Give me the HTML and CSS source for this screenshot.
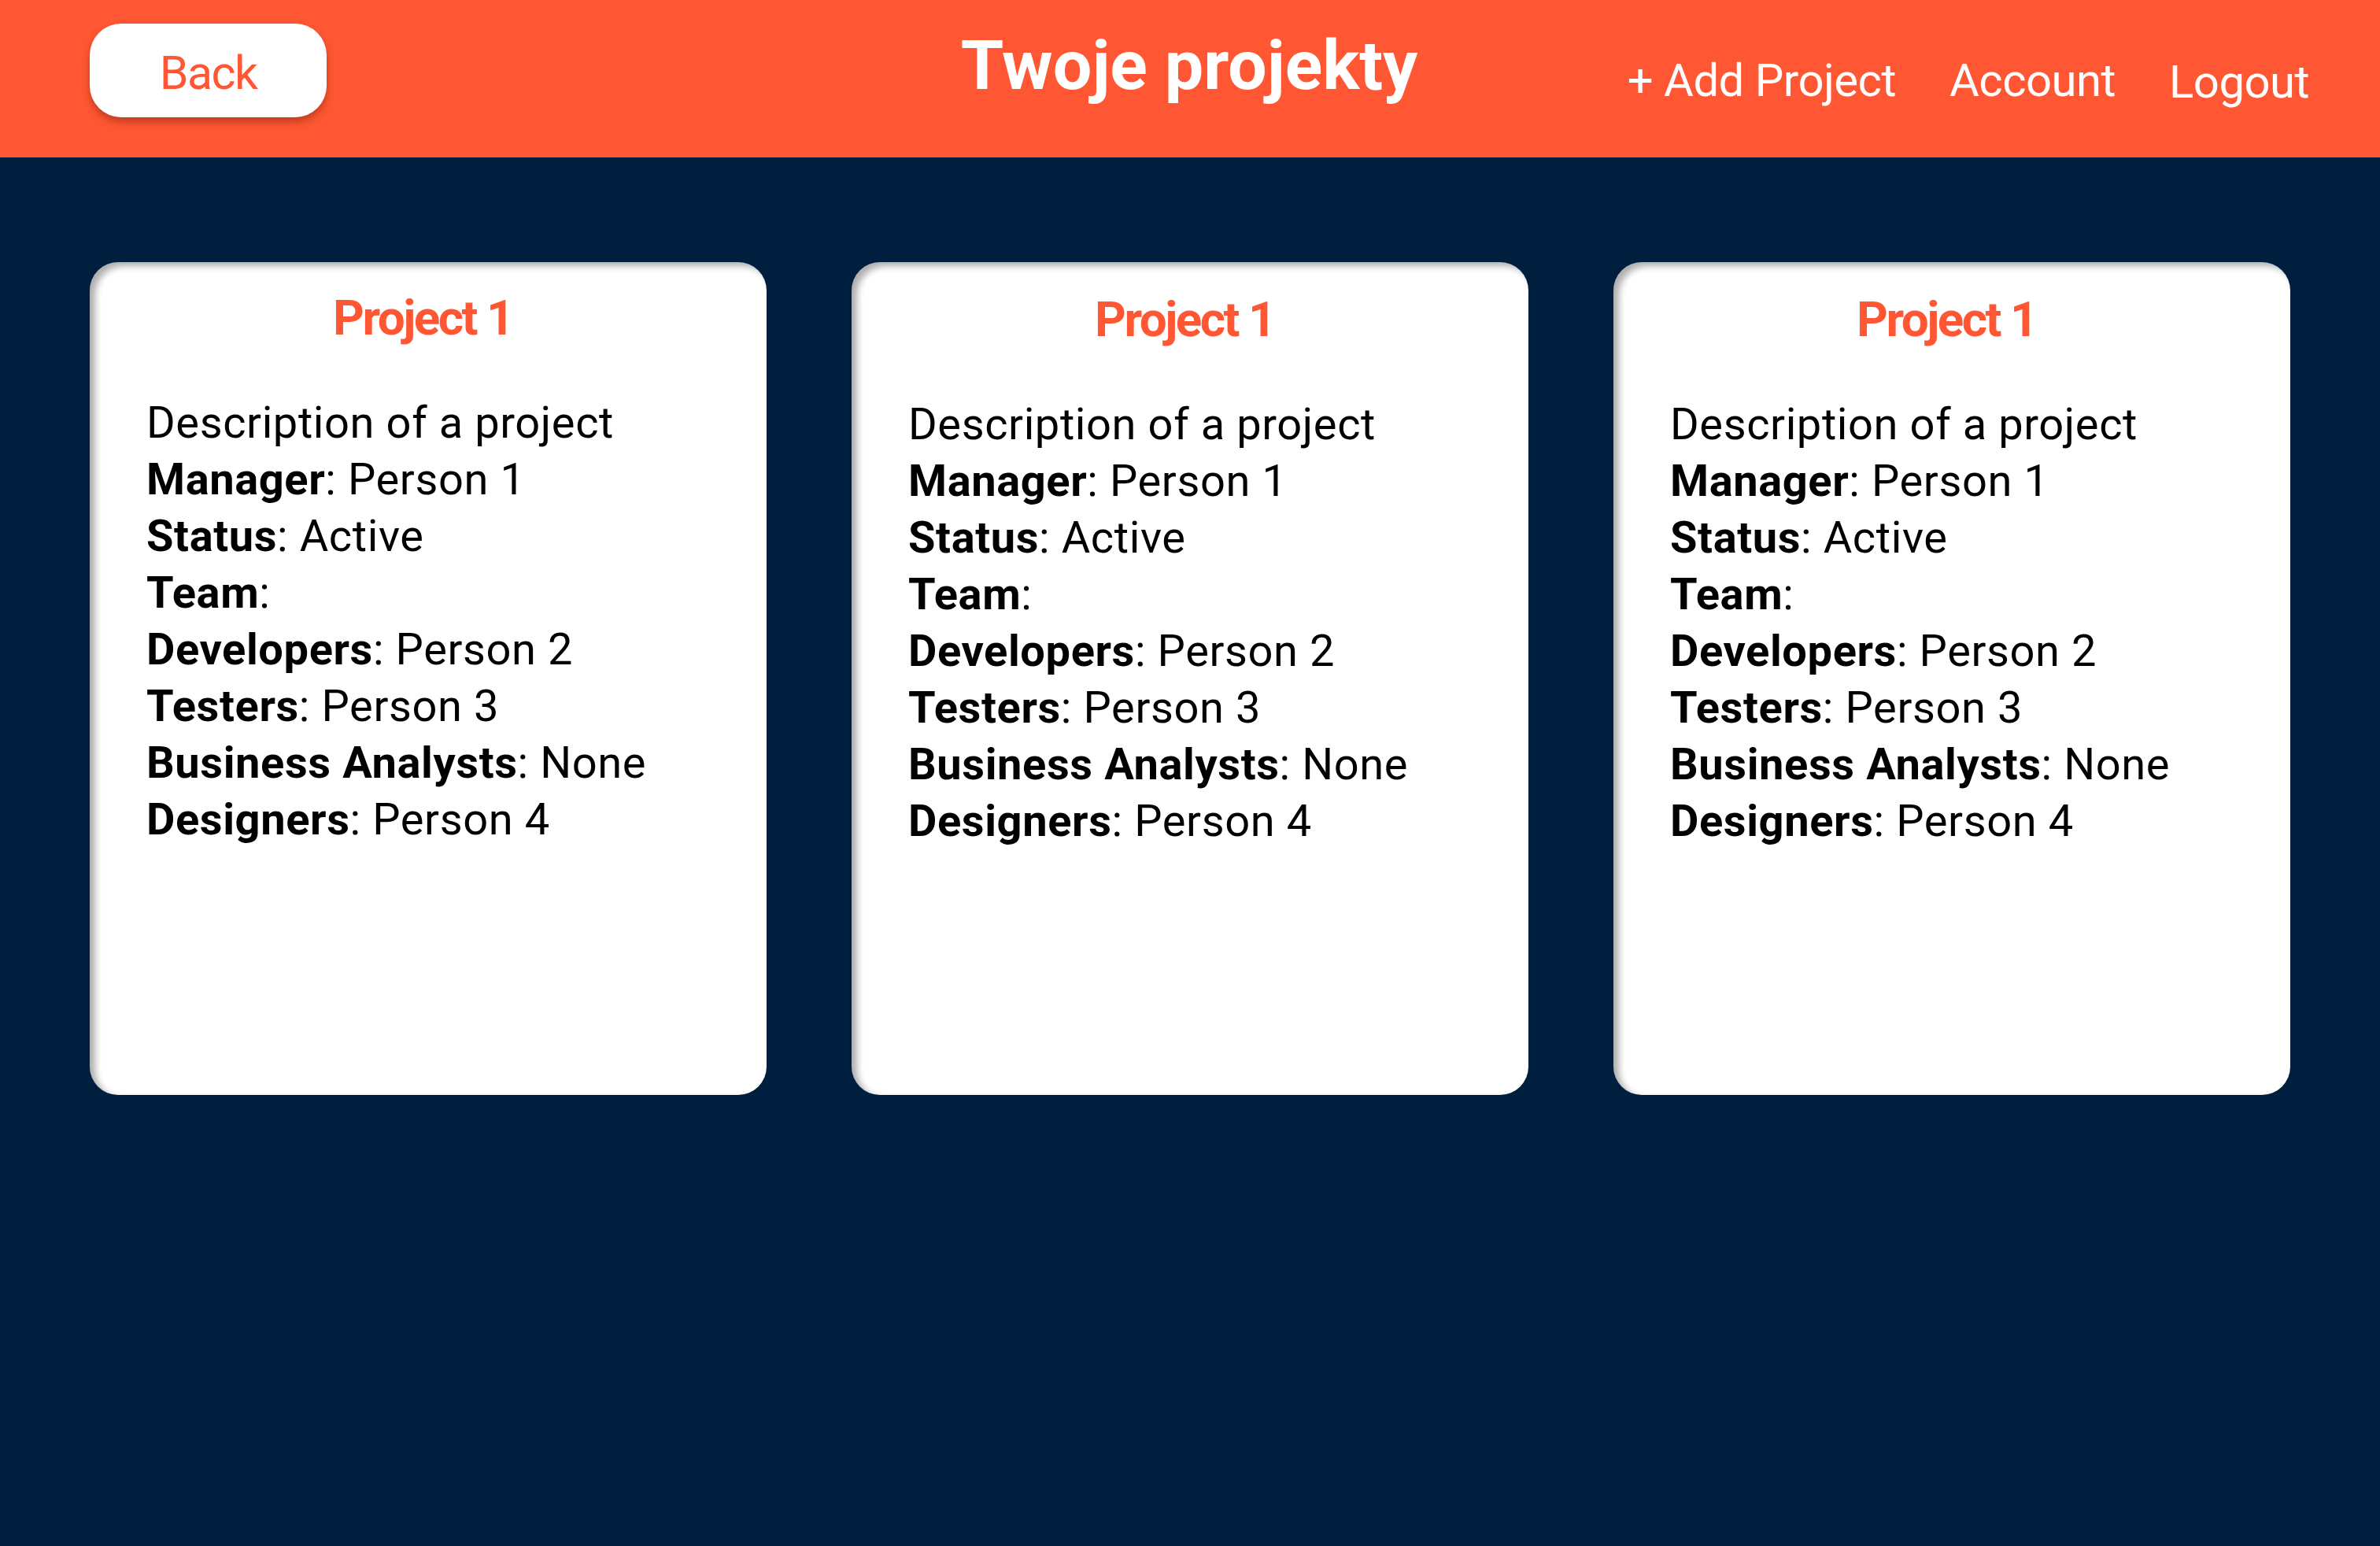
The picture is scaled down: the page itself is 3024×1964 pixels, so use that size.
FILE: index.html
```html
<!DOCTYPE html>
<html lang="pl">
<head>
<meta charset="utf-8">
<title>Twoje projekty</title>
<link rel="stylesheet" href="styles.css">
</head>
<body>
<header class="topbar">
  <div class="topbar-left"><button class="back-btn">Back</button></div>
  <h1 class="page-title">Twoje projekty</h1>
  <nav class="topnav">
    <a class="nav-link" href="#">+ Add Project</a>
    <a class="nav-link" href="#">Account</a>
    <a class="nav-link nav-logout" href="#">Logout</a>
  </nav>
</header>
<main class="projects">
  <section class="card">
    <h2 class="card-title">Project 1</h2>
    <div class="card-body">
      <p class="line">Description of a project</p>
      <p class="line"><b>Manager</b>: Person 1</p>
      <p class="line"><b>Status</b>: Active</p>
      <p class="line"><b>Team</b>:</p>
      <p class="line"><b>Developers</b>: Person 2</p>
      <p class="line"><b>Testers</b>: Person 3</p>
      <p class="line"><b>Business Analysts</b>: None</p>
      <p class="line"><b>Designers</b>: Person 4</p>
    </div>
  </section>
  <section class="card card-shifted">
    <h2 class="card-title">Project 1</h2>
    <div class="card-body">
      <p class="line">Description of a project</p>
      <p class="line"><b>Manager</b>: Person 1</p>
      <p class="line"><b>Status</b>: Active</p>
      <p class="line"><b>Team</b>:</p>
      <p class="line"><b>Developers</b>: Person 2</p>
      <p class="line"><b>Testers</b>: Person 3</p>
      <p class="line"><b>Business Analysts</b>: None</p>
      <p class="line"><b>Designers</b>: Person 4</p>
    </div>
  </section>
  <section class="card card-shifted">
    <h2 class="card-title">Project 1</h2>
    <div class="card-body">
      <p class="line">Description of a project</p>
      <p class="line"><b>Manager</b>: Person 1</p>
      <p class="line"><b>Status</b>: Active</p>
      <p class="line"><b>Team</b>:</p>
      <p class="line"><b>Developers</b>: Person 2</p>
      <p class="line"><b>Testers</b>: Person 3</p>
      <p class="line"><b>Business Analysts</b>: None</p>
      <p class="line"><b>Designers</b>: Person 4</p>
    </div>
  </section>
</main>
</body>
</html>
```

FILE: styles.css
```css
* { box-sizing: border-box; }

html, body {
  margin: 0;
  padding: 0;
}

body {
  background: #001f3f;
  font-family: Roboto, "Noto Sans", sans-serif;
  min-height: 1964px;
}

.topbar {
  height: 200px;
  background: #ff5733;
  display: grid;
  grid-template-columns: 1fr auto 1fr;
  align-items: start;
  padding: 0 90px 0 114px;
}

.topbar-left {
  display: flex;
}

.back-btn {
  margin-top: 30px;
  width: 301px;
  height: 119px;
  border: none;
  border-radius: 40px;
  background: #ffffff;
  color: #ff5733;
  font-family: Roboto, "Noto Sans", sans-serif;
  font-size: 59px;
  font-weight: 400;
  letter-spacing: -1.5px;
  padding: 5px 0 0;
  display: flex;
  align-items: center;
  justify-content: center;
  box-shadow: 0 6px 10px rgba(120, 30, 10, 0.45);
  cursor: pointer;
}

.page-title {
  margin: 33px 0 0;
  padding-right: 26px;
  color: #ffffff;
  font-size: 88px;
  line-height: 100px;
  font-weight: 700;
  letter-spacing: 0;
}

.topnav {
  justify-self: end;
  display: flex;
  gap: 68px;
  margin-top: 67px;
}

.nav-link {
  color: #ffffff;
  text-decoration: none;
  font-size: 58px;
  line-height: 70px;
  letter-spacing: -0.5px;
}

.nav-logout {
  margin-top: 2px;
}

.projects {
  display: grid;
  grid-template-columns: repeat(3, 1fr);
  gap: 108px;
  padding: 133px 114px 0;
}

.card {
  height: 1058px;
  background: #ffffff;
  border-radius: 36px;
  box-shadow: inset 7px 5px 9px rgba(0, 0, 0, 0.32);
  padding: 35px 40px 0 72px;
}

.card-shifted {
  padding-top: 37px;
}

.card-title {
  margin: 0;
  text-align: center;
  color: #ff5733;
  font-size: 62px;
  line-height: 72px;
  font-weight: 700;
  letter-spacing: -2.5px;
  padding-right: 46px;
}

.card-body {
  margin-top: 61px;
}

.line {
  margin: 0;
  color: #000000;
  font-size: 56px;
  line-height: 72px;
  letter-spacing: 0.6px;
}

.line b {
  font-weight: 700;
}
```
